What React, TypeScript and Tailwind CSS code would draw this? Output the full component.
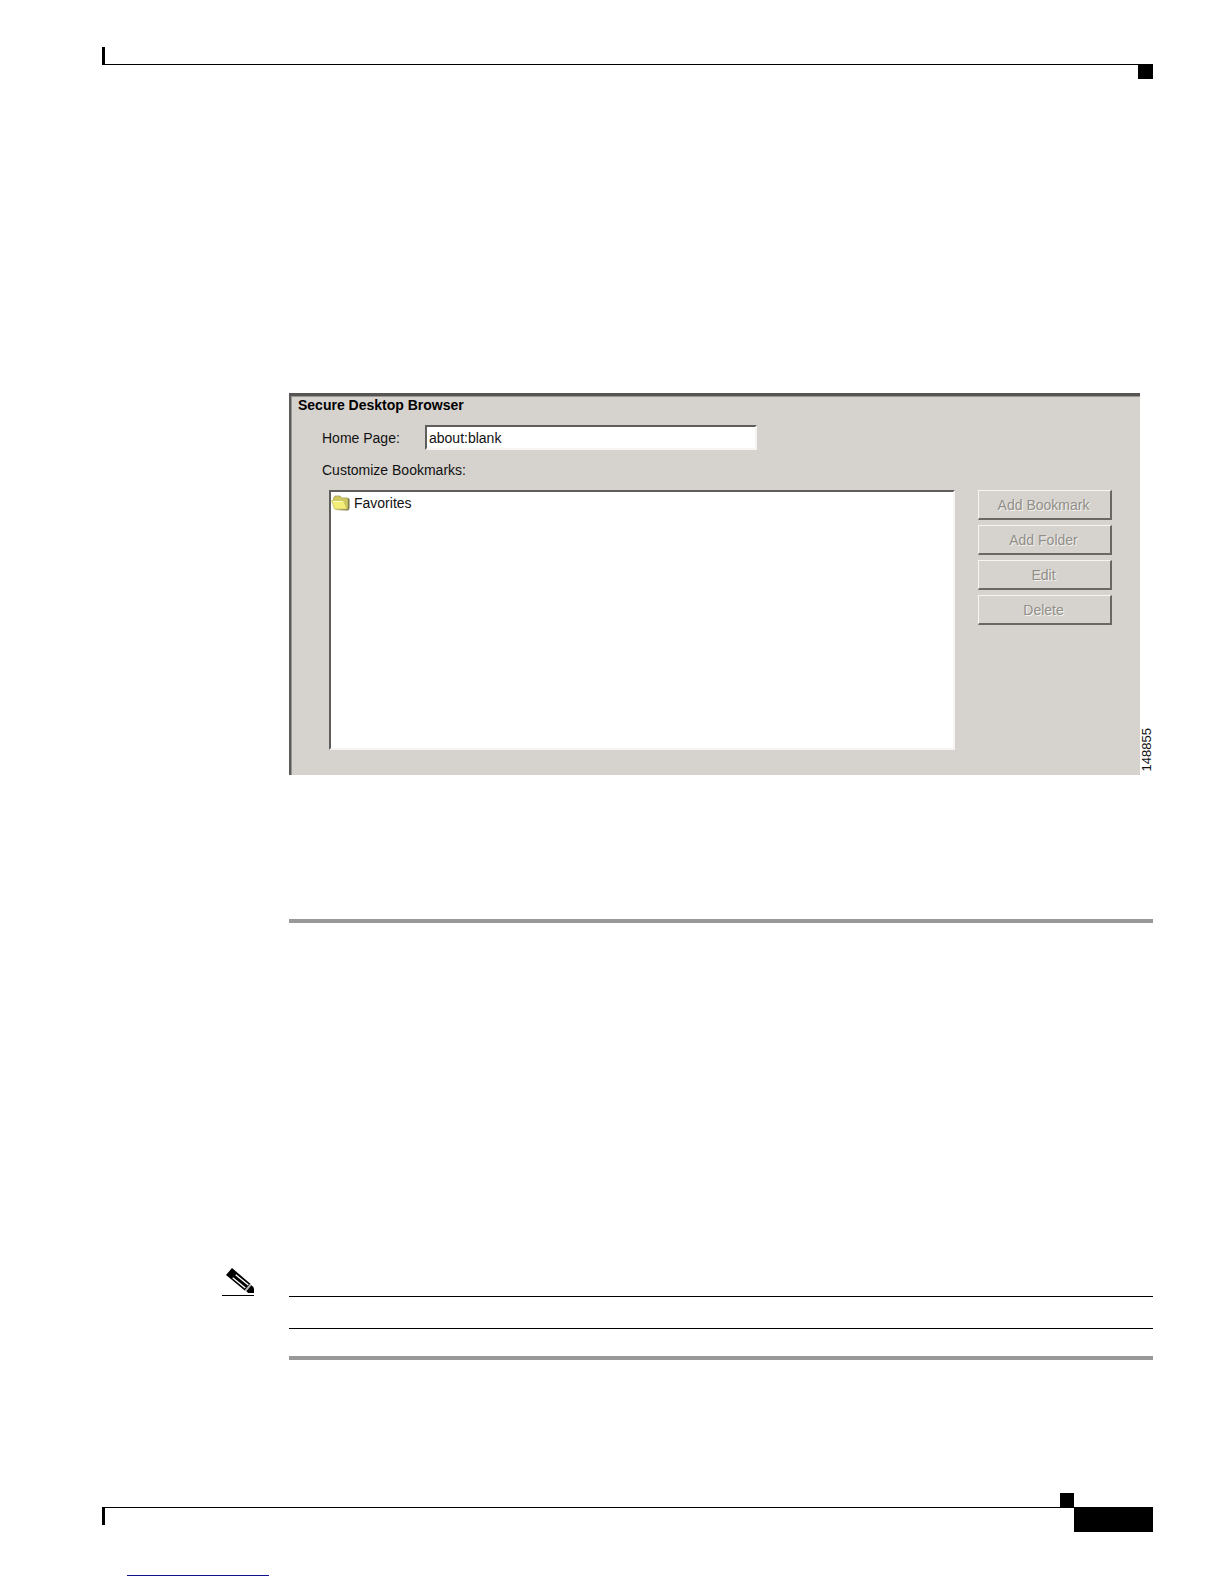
import { useState } from "react";

const actions = ["Add Bookmark", "Add Folder", "Edit", "Delete"];

const sunken =
  "border-2 border-t-[#605e5c] border-l-[#605e5c] border-r-[#f6f5f3] border-b-[#f6f5f3] bg-white";

function FolderIcon() {
  return (
    <svg width="19" height="16" viewBox="0 0 19 16" aria-hidden="true">
      <path d="M4 15 17 15.5 18.5 13.5V4L17 3v10.5z" fill="#6d6c4c" />
      <path d="M2.5 3 4 1h5L10.500 3H17v11H4z" fill="#cdc862" stroke="#a5a052" strokeWidth="0.8" />
      <path d="M0.6 5.500H12.500l3.400 8.500H3.500z" fill="#f3ee78" stroke="#c9c35e" strokeWidth="0.8" />
      <path d="M2.500 6.500h9" stroke="#fffdc9" />
    </svg>
  );
}

function PencilIcon() {
  return (
    <svg width="32" height="26" viewBox="0 0 96 78" aria-hidden="true">
      <path d="M30 0 12 21 69 68 86 48z" fill="#000" />
      <path d="M41 20 79 51M32 29 70 60" stroke="#fff" strokeWidth="4" />
      <path d="M71 68 86 50" stroke="#bbb" strokeWidth="6" />
      <path d="M88 52 94 57 97 64V75H79L73 70z" fill="#000" />
    </svg>
  );
}

function BrowserPanel() {
  const [homePage, setHomePage] = useState("about:blank");

  return (
    <section className="flex-1 border-t-3 border-l-2 border-t-[#565553] border-l-[#5c5b59] bg-[#d6d3ce] pt-px pr-7 pb-[25px] pl-[7px] inset-shadow-[1px_1px_0_#989692]">
      <h1 className="text-sm leading-4 font-bold text-black">Secure Desktop Browser</h1>
      <div className="mt-3 ml-6 flex items-center">
        <label htmlFor="home-page" className="w-[103px]">
          Home Page:
        </label>
        <input
          id="home-page"
          value={homePage}
          onChange={(event) => setHomePage(event.target.value)}
          className={`h-[25px] w-[332px] px-[2px] outline-none ${sunken}`}
        />
      </div>
      <h2 id="bookmarks" className="mt-3 ml-6 leading-4">
        Customize Bookmarks:
      </h2>
      <div className="mt-3 ml-[31px] flex items-start gap-[23px]">
        <ul aria-labelledby="bookmarks" className={`h-[260px] flex-1 py-px ${sunken}`}>
          <li className="flex h-5 items-center gap-1">
            <FolderIcon />
            Favorites
          </li>
        </ul>
        <div className="flex w-[134px] flex-col gap-[5px]">
          {actions.map((action) => (
            <button
              key={action}
              type="button"
              disabled
              className="h-[30px] border border-t-[#f6f5f3] border-r-2 border-r-[#6b6864] border-b-2 border-b-[#6b6864] border-l-[#f6f5f3] pr-[2px] text-[#918e89] text-shadow-[1px_1px_0_#f4f3f0]"
            >
              {action}
            </button>
          ))}
        </div>
      </div>
    </section>
  );
}

export default function App() {
  return (
    <div className="flex min-h-screen flex-col bg-white pt-[47px] pr-[71px] pb-2 pl-[102px] font-['Liberation_Sans',Arial,sans-serif] text-sm text-[#111]">
      <header>
        <div className="h-[17px] w-[3px] bg-black" />
        <div className="flex justify-end border-t border-black">
          <div className="h-[14px] w-[15px] bg-black" />
        </div>
      </header>

      <main className="mt-[314px] pl-[187px]">
        <div className="flex items-end">
          <BrowserPanel />
          <span className="w-[13px] rotate-180 pt-1 text-[13px] leading-[13px] [writing-mode:vertical-rl]">
            148855
          </span>
        </div>
        <hr className="mt-36 border-t-4 border-[#999]" />

        <div className="mt-[345px] -ml-[67px] flex">
          <div className="mr-[35px] w-8 self-start border-b border-black pb-px">
            <PencilIcon />
          </div>
          <div className="mt-7 h-[33px] flex-1 border-y border-black" />
        </div>
        <hr className="mt-[27px] border-t-4 border-[#999]" />
      </main>

      <footer className="mt-[133px]">
        <div className="flex justify-end pr-[79px]">
          <div className="size-[14px] bg-black" />
        </div>
        <div className="flex justify-between border-t border-black">
          <div className="h-[17px] w-[3px] bg-black" />
          <div className="h-6 w-[79px] bg-black" />
        </div>
        <div className="mt-[43px] ml-[25px] w-[142px] border-t border-[#11118c]" />
      </footer>
    </div>
  );
}
